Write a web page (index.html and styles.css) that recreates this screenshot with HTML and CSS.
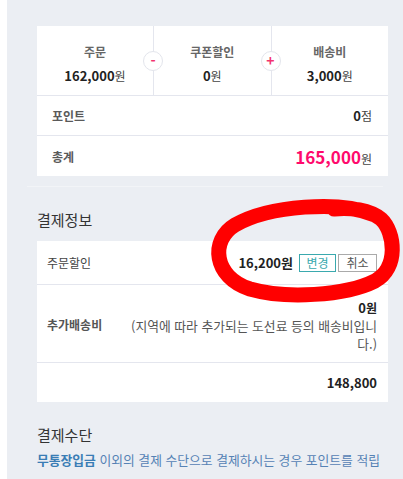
FILE: index.html
```html
<!DOCTYPE html>
<html lang="ko">
<head>
<meta charset="utf-8">
<title>결제</title>
<link rel="stylesheet" href="styles.css">
</head>
<body>
<div class="page">
  <section class="card summary">
    <div class="totals">
      <div class="col">
        <span class="lbl">주문</span>
        <span class="val">162,000<span class="unit">원</span></span>
      </div>
      <div class="col">
        <span class="op minus">-</span>
        <span class="lbl">쿠폰할인</span>
        <span class="val">0<span class="unit">원</span></span>
      </div>
      <div class="col">
        <span class="op plus">+</span>
        <span class="lbl">배송비</span>
        <span class="val">3,000<span class="unit">원</span></span>
      </div>
    </div>
    <div class="row">
      <span class="rlbl">포인트</span>
      <span class="rval">0<span class="unit">점</span></span>
    </div>
    <div class="row total">
      <span class="rlbl">총계</span>
      <span class="rval"><span class="big">165,000</span><span class="unit">원</span></span>
    </div>
  </section>

  <hr class="sep">

  <h3 class="sec-title">결제정보</h3>
  <section class="card info">
    <div class="irow discount">
      <span class="ilbl">주문할인</span>
      <div class="iright">
        <span class="amount">16,200원</span>
        <button class="btn change">변경</button>
        <button class="btn cancel">취소</button>
      </div>
    </div>
    <div class="irow extra">
      <span class="ilbl strong">추가배송비</span>
      <div class="extra-val">
        <span class="amount">0<span class="unit">원</span></span>
        <p class="desc">(지역에 따라 추가되는 도선료 등의 배송비입니다.)</p>
      </div>
    </div>
    <div class="irow sum">
      <span class="amount">148,800</span>
    </div>
  </section>

  <h3 class="sec-title method">결제수단</h3>
  <p class="note"><b>무통장입금</b> 이외의 결제 수단으로 결제하시는 경우 포인트를 적립</p>

  <svg class="mark" width="403" height="479" viewBox="0 0 403 479" aria-hidden="true">
    <path d="M372 214 C340 201, 270 205, 235 225 C210 240, 213 277, 250 289 C285 299, 345 296, 375 281 C399 268, 395 232, 381 219 C370 210, 350 207, 334 209" fill="none" stroke="#ff0000" stroke-width="15" stroke-linecap="round" stroke-linejoin="round"/>
  </svg>
</div>
</body>
</html>
```

FILE: styles.css
```css
* { box-sizing: border-box; }
html, body { margin: 0; padding: 0; }
body {
  background: #ffffff;
  font-family: "Noto Sans CJK KR", "Noto Sans", sans-serif;
  color: #222;
  width: 403px;
  height: 479px;
  overflow: hidden;
}
.page {
  position: relative;
  margin-left: 7px;
  background: #ebeef3;
  height: 479px;
  padding: 26px 15px 0 30px;
}
.card {
  background: #ffffff;
}
.totals {
  display: grid;
  grid-template-columns: 116px 1fr 1fr;
  border-bottom: 1px solid #e4e6ee;
}
.col {
  position: relative;
  height: 69px;
  padding-top: 17px;
  display: flex;
  flex-direction: column;
  align-items: center;
  gap: 6px;
}
.col + .col { border-left: 1px solid #e4e6ee; }
.lbl {
  font-size: 12px;
  line-height: 18px;
  font-weight: 700;
  color: #666;
}
.val {
  font-size: 13px;
  line-height: 18px;
  font-weight: 700;
  color: #222;
}
.unit {
  font-size: 12px;
  font-weight: 400;
  color: #444;
}
.op {
  position: absolute;
  left: -11px;
  top: 25px;
  width: 20px;
  height: 20px;
  border-radius: 50%;
  background: #fff;
  border: 1px solid #e3e5ec;
  color: #f2336f;
  font-size: 14px;
  font-weight: 700;
  line-height: 17px;
  text-align: center;
}
.row {
  display: flex;
  justify-content: space-between;
  align-items: center;
  height: 40px;
  padding: 0 16px 0 15px;
  border-bottom: 1px solid #e4e6ee;
}
.row.total { border-bottom: 0; height: 40px; }
.rlbl {
  font-size: 12px;
  font-weight: 700;
  color: #5a5a5a;
}
.rval {
  font-size: 13px;
  font-weight: 700;
  color: #222;
}
.big {
  font-size: 17px;
  color: #ff0a6c;
}
.sep {
  margin: 10px 5px 0 -10px;
  border: 0;
  height: 1px;
  background: #f2f4f7;
}
.sec-title {
  margin: 22px 0 10px;
  font-size: 15px;
  line-height: 22px;
  font-weight: 400;
  color: #333;
}
.irow {
  display: flex;
  align-items: center;
  justify-content: space-between;
  padding: 0 11px 0 10px;
  border-bottom: 1px solid #e4e6ee;
}
.irow.discount { height: 44px; }
.irow.extra { height: 78px; padding-top: 2px; }
.irow.sum { height: 39px; border-bottom: 0; justify-content: flex-end; }
.ilbl {
  font-size: 12px;
  color: #444;
}
.ilbl.strong { font-weight: 700; color: #555; }
.iright {
  display: flex;
  align-items: center;
}
.amount {
  font-size: 13px;
  font-weight: 700;
  color: #222;
}
.discount .amount { margin-right: 6px; }
.btn {
  height: 18px;
  padding: 0;
  margin: 0;
  background: #fff;
  font-family: inherit;
  font-size: 12px;
  line-height: 16px;
}
.btn.change {
  width: 37px;
  border: 1px solid #3aa9ae;
  color: #3aa9ae;
}
.btn.cancel {
  width: 39px;
  margin-left: 2px;
  border: 1px solid #aaaaaa;
  color: #555;
}
.extra-val {
  width: 250px;
  text-align: right;
  line-height: 18px;
}
.extra-val .unit { color: #222; font-weight: 700; font-size: 12px; }
.desc {
  margin: 0;
  font-size: 12.8px;
  line-height: 18px;
  color: #555;
}
.method { margin-top: 22px; margin-bottom: 5px; }
.note {
  margin: 0;
  font-size: 12.8px;
  line-height: 18px;
  color: #5582b5;
  white-space: nowrap;
}
.note b { color: #3a7db5; }
.mark {
  position: absolute;
  left: -7px;
  top: 0;
  pointer-events: none;
}
```
